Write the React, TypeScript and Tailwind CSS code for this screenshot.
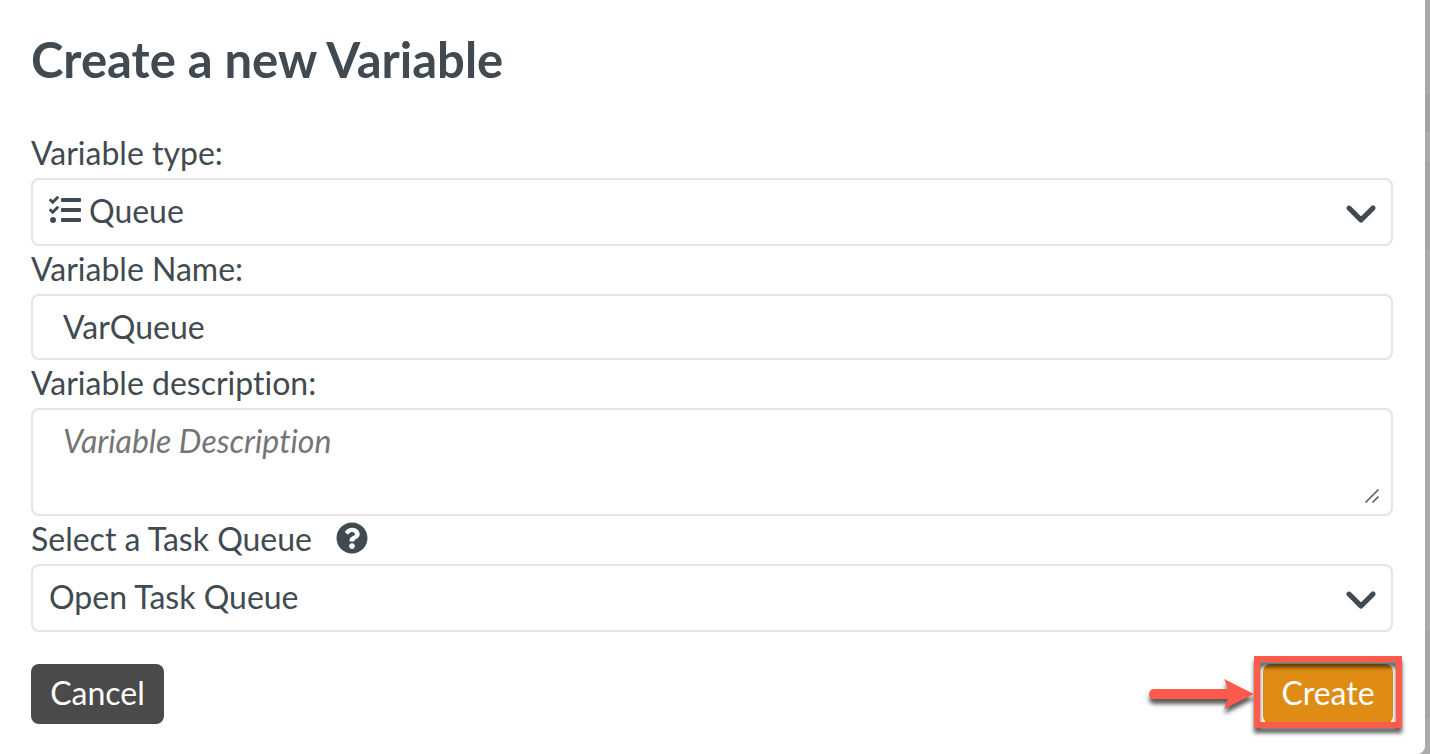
import { useState } from "react";
import { FaQuestionCircle, FaTasks } from "react-icons/fa";
import { FaChevronDown } from "react-icons/fa6";

const variableTypes = ["Queue", "Text", "Number", "Date"];
const taskQueues = ["Open Task Queue", "Closed Task Queue"];

export default function App() {
  const [type, setType] = useState("Queue");
  const [name, setName] = useState("VarQueue");
  const [description, setDescription] = useState("");
  const [queue, setQueue] = useState("Open Task Queue");

  return (
    <div className="flex min-h-screen bg-[linear-gradient(to_left,#ababab_16px,#fff_16px)] font-['Lato',sans-serif] text-[32px] text-[#414a51] [font-variant-ligatures:none]">
      <form
        onSubmit={(e) => e.preventDefault()}
        className="min-w-0 flex-1 rounded-br-lg bg-white pt-7 pr-8 pb-[30px] pl-[31px]"
      >
        <h1 className="mb-10 text-[49px] leading-[62px] font-bold">Create a new Variable</h1>

        <FieldLabel id="type">Variable type:</FieldLabel>
        <Select
          id="type"
          value={type}
          options={variableTypes}
          onChange={setType}
          icon={<FaTasks className="size-8" />}
        />

        <FieldLabel id="name">Variable Name:</FieldLabel>
        <input
          id="name"
          value={name}
          onChange={(e) => setName(e.target.value)}
          className="block h-[66px] w-full rounded-lg border-2 border-[#e4e4e4] px-[30px] pb-0.5 outline-none"
        />

        <FieldLabel id="description">Variable description:</FieldLabel>
        <div className="relative">
          <textarea
            id="description"
            value={description}
            onChange={(e) => setDescription(e.target.value)}
            placeholder="Variable Description"
            className="block h-[108px] w-full resize-none rounded-lg border-2 border-[#e4e4e4] px-[30px] py-3 leading-[38px] outline-none placeholder:text-[#757575] placeholder:italic"
          />
          <svg
            viewBox="0 0 14 14"
            className="pointer-events-none absolute right-3.5 bottom-[13px] size-3.5"
            fill="none"
            stroke="#555"
            strokeWidth="1.5"
          >
            <path d="M.5 13.5 13.5.5M7.5 13.5l6-6" />
          </svg>
        </div>

        <div className="flex items-center gap-6">
          <FieldLabel id="queue">Select a Task Queue</FieldLabel>
          <button type="button" aria-label="About task queues" className="pb-1">
            <FaQuestionCircle className="size-8" />
          </button>
        </div>
        <Select id="queue" value={queue} options={taskQueues} onChange={setQueue} />

        <div className="mt-8 flex items-center justify-between text-white">
          <button type="button" className="h-[60px] w-[133px] rounded-lg bg-[#4a4a4a] pb-0.5">
            Cancel
          </button>
          <div className="relative">
            <button type="submit" className="block h-[60px] w-[130px] rounded-lg bg-[#de8c14] pb-0.5">
              Create
            </button>
            <Callout />
          </div>
        </div>
      </form>
      <Backdrop />
    </div>
  );
}

function FieldLabel({ id, children }: { id: string; children: React.ReactNode }) {
  return (
    <label htmlFor={id} className="block h-12 leading-[46px]">
      {children}
    </label>
  );
}

function Select({
  id,
  value,
  options,
  onChange,
  icon,
}: {
  id: string;
  value: string;
  options: string[];
  onChange: (value: string) => void;
  icon?: React.ReactNode;
}) {
  return (
    <div className="relative">
      {icon && (
        <span className="pointer-events-none absolute inset-y-0 left-[18px] flex items-center pb-1">
          {icon}
        </span>
      )}
      <select
        id={id}
        value={value}
        onChange={(e) => onChange(e.target.value)}
        className={`block h-[68px] w-full appearance-none rounded-lg border-2 border-[#e4e4e4] bg-white pr-16 pb-0.5 outline-none ${icon ? "pl-14" : "pl-4"}`}
      >
        {options.map((o) => (
          <option key={o}>{o}</option>
        ))}
      </select>
      <span className="pointer-events-none absolute inset-y-0 right-4 flex items-center">
        <FaChevronDown className="size-8" stroke="currentColor" strokeWidth={18} />
      </span>
    </div>
  );
}

// Red frame and arrow pointing at the Create button
function Callout() {
  return (
    <svg
      viewBox="0 0 270 94"
      className="pointer-events-none absolute -top-4 -right-5 h-[94px] w-[270px] max-w-none"
      fill="none"
    >
      <g className="[filter:drop-shadow(0_5px_2px_rgba(0,0,0,0.65))]">
        <path d="M11 46h80" stroke="#ff5a4c" strokeWidth="10" strokeLinecap="round" />
        <path d="m81 31 30 15-30 15 6-15z" fill="#ff5a4c" />
        <path d="M114 11h142v66H114z" stroke="#ff5a4c" strokeWidth="6" />
      </g>
    </svg>
  );
}

// Sliver of the dimmed page next to the dialog
function Backdrop() {
  return (
    <div className="flex w-[5px] flex-col bg-[#ababab]">
      <div className="h-[94px] bg-[#a9a9a9]" />
      <div className="h-[38px] bg-[#a3a3a3]" />
      <div className="h-[30px] bg-[#ababab]" />
      <div className="h-[88px] bg-[#a5a5a5]" />
      <div className="mt-[380px] h-[88px] bg-[#a5a5a5]" />
    </div>
  );
}
